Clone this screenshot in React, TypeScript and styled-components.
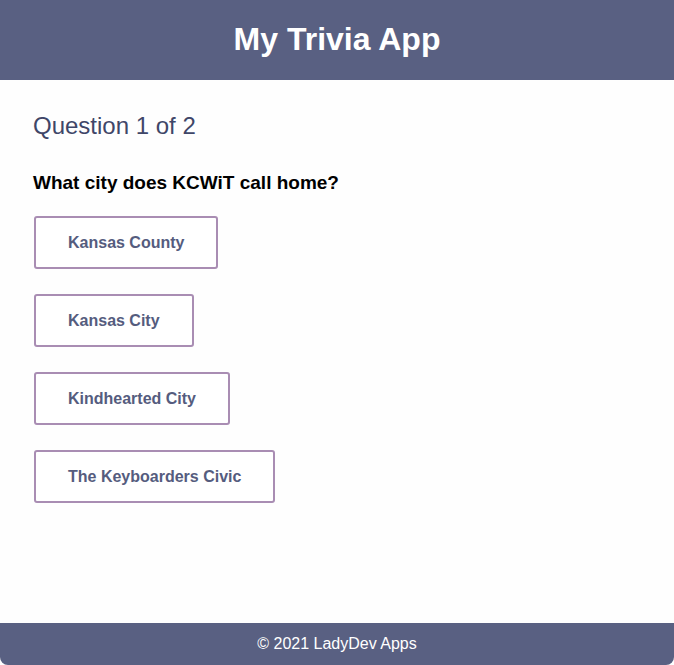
import React, { useState } from 'react';
import styled, { createGlobalStyle } from 'styled-components';

const GlobalStyle = createGlobalStyle`
  html, body {
    margin: 0;
    padding: 0;
    background: #fefefe;
  }
  body {
    font-family: "Liberation Sans", Arial, Helvetica, sans-serif;
  }
`;

const Page = styled.div`
  display: flex;
  flex-direction: column;
  min-height: 100vh;
  background: #fefefe;
`;

const Header = styled.header`
  height: 80px;
  background-color: #596082;
  display: flex;
  align-items: center;
  justify-content: center;
`;

const Title = styled.h1`
  margin: 0;
  color: #ffffff;
  font-size: 32px;
  font-weight: bold;
  line-height: 36px;
  padding-bottom: 2px;
`;

const Main = styled.main`
  flex: 1;
  padding: 32px 33px 0;
`;

const Counter = styled.h2`
  margin: 0;
  font-size: 24px;
  font-weight: normal;
  line-height: 28px;
  color: #3f4668;
`;

const QuestionText = styled.p`
  margin: 32px 0 22px;
  font-size: 19px;
  font-weight: bold;
  line-height: 22px;
  color: #000000;
`;

const Answers = styled.div`
  display: flex;
  flex-direction: column;
  align-items: flex-start;
  gap: 25px;
`;

const AnswerButton = styled.button<{ $picked: boolean }>`
  margin-left: 1px;
  padding: 16px 32px;
  font-family: "Liberation Sans", Arial, Helvetica, sans-serif;
  font-size: 16px;
  font-weight: bold;
  line-height: 17px;
  color: ${(p) => (p.$picked ? '#ffffff' : '#555c7e')};
  background-color: ${(p) => (p.$picked ? '#596082' : '#ffffff')};
  border: 2px solid #a98db3;
  border-radius: 3px;
  cursor: pointer;
`;

const Footer = styled.footer`
  height: 42px;
  background-color: #596082;
  display: flex;
  align-items: center;
  justify-content: center;
  color: #ffffff;
  font-size: 16px;
  border-radius: 0 0 8px 8px;
`;

const answers = ['Kansas County', 'Kansas City', 'Kindhearted City', 'The Keyboarders Civic'];

const App = () => {
    const [picked, setPicked] = useState<number | null>(null);

    return (
        <Page>
            <GlobalStyle />
            <Header>
                <Title>My Trivia App</Title>
            </Header>
            <Main>
                <Counter>Question 1 of 2</Counter>
                <QuestionText>What city does KCWiT call home?</QuestionText>
                <Answers>
                    {answers.map((a, i) => (
                        <AnswerButton key={a} $picked={picked === i} onClick={() => setPicked(i)}>
                            {a}
                        </AnswerButton>
                    ))}
                </Answers>
            </Main>
            <Footer>© 2021 LadyDev Apps</Footer>
        </Page>
    );
};

export default App;
